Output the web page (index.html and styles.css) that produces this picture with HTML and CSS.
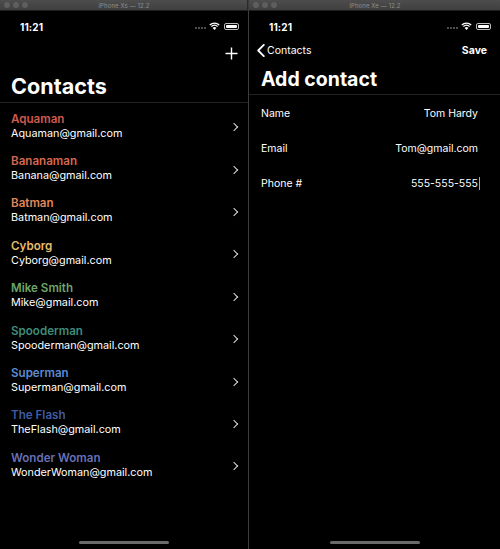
FILE: index.html
```html
<!DOCTYPE html>
<html>
<head>
<meta charset="utf-8">
<link rel="stylesheet" href="styles.css">
</head>
<body>
<div class="desk">
  <section class="win win-left">
    <div class="titlebar">
      <div class="lights"><span></span><span></span><span></span></div>
      <div class="wtitle">iPhone Xs — 12.2</div>
    </div>
    <div class="screen">
      <div class="status">
        <span class="time">11:21</span>
        <span class="sicons">
          <span class="dots"><i></i><i></i><i></i><i></i></span>
          <svg class="wifi" width="11" height="8" viewBox="0 0 11 8"><path d="M5.5 8 L3.6 5.9 A2.8 2.8 0 0 1 7.4 5.9 Z" fill="#fff"/><path d="M2.4 4.6 A4.6 4.6 0 0 1 8.6 4.6" stroke="#fff" stroke-width="1.3" fill="none"/><path d="M0.8 2.9 A6.9 6.9 0 0 1 10.2 2.9" stroke="#fff" stroke-width="1.3" fill="none"/></svg>
          <span class="battery"><b></b></span>
        </span>
      </div>
      <div class="navbar nav-right">
        <svg class="plus" width="13" height="13" viewBox="0 0 13 13"><path d="M6.5 0.5V12.5M0.5 6.5H12.5" stroke="#fff" stroke-width="1.4"/></svg>
      </div>
      <h1 class="large">Contacts</h1>
      <ul class="list">
        <li class="row"><div><div class="nm c1">Aquaman</div><div class="em">Aquaman@gmail.com</div></div><span class="chev"></span></li>
        <li class="row"><div><div class="nm c2">Bananaman</div><div class="em">Banana@gmail.com</div></div><span class="chev"></span></li>
        <li class="row"><div><div class="nm c3">Batman</div><div class="em">Batman@gmail.com</div></div><span class="chev"></span></li>
        <li class="row"><div><div class="nm c4">Cyborg</div><div class="em">Cyborg@gmail.com</div></div><span class="chev"></span></li>
        <li class="row"><div><div class="nm c5">Mike Smith</div><div class="em">Mike@gmail.com</div></div><span class="chev"></span></li>
        <li class="row"><div><div class="nm c6">Spooderman</div><div class="em">Spooderman@gmail.com</div></div><span class="chev"></span></li>
        <li class="row"><div><div class="nm c7">Superman</div><div class="em">Superman@gmail.com</div></div><span class="chev"></span></li>
        <li class="row"><div><div class="nm c8">The Flash</div><div class="em">TheFlash@gmail.com</div></div><span class="chev"></span></li>
        <li class="row"><div><div class="nm c9">Wonder Woman</div><div class="em">WonderWoman@gmail.com</div></div><span class="chev"></span></li>
      </ul>
      <div class="home"><span></span></div>
    </div>
  </section>
  <section class="win win-right">
    <div class="titlebar">
      <div class="lights"><span></span><span></span><span></span></div>
      <div class="wtitle">iPhone Xe — 12.2</div>
    </div>
    <div class="screen">
      <div class="status">
        <span class="time">11:21</span>
        <span class="sicons">
          <span class="dots"><i></i><i></i><i></i><i></i></span>
          <svg class="wifi" width="11" height="8" viewBox="0 0 11 8"><path d="M5.5 8 L3.6 5.9 A2.8 2.8 0 0 1 7.4 5.9 Z" fill="#fff"/><path d="M2.4 4.6 A4.6 4.6 0 0 1 8.6 4.6" stroke="#fff" stroke-width="1.3" fill="none"/><path d="M0.8 2.9 A6.9 6.9 0 0 1 10.2 2.9" stroke="#fff" stroke-width="1.3" fill="none"/></svg>
          <span class="battery"><b></b></span>
        </span>
      </div>
      <div class="navbar nav-split">
        <span class="back"><svg width="8" height="13" viewBox="0 0 8 13"><path d="M6.8 0.8 L1.2 6.5 L6.8 12.2" stroke="#fff" stroke-width="1.8" fill="none" stroke-linecap="round" stroke-linejoin="round"/></svg>Contacts</span>
        <span class="save">Save</span>
      </div>
      <h1 class="large large2">Add contact</h1>
      <div class="form">
        <div class="frow"><span>Name</span><span>Tom Hardy</span></div>
        <div class="frow"><span>Email</span><span>Tom@gmail.com</span></div>
        <div class="frow"><span>Phone #</span><span class="caret">555-555-555</span></div>
      </div>
      <div class="home"><span></span></div>
    </div>
  </section>
</div>
</body>
</html>
```
FILE: styles.css
```css
* { box-sizing: border-box; margin: 0; padding: 0; }
html, body { background: #000; }
body { width: 500px; height: 549px; overflow: hidden; font-family: Inter, "Noto Sans", "Liberation Sans", sans-serif; color: #fff; }
.desk { display: flex; width: 500px; height: 549px; }
.win { display: flex; flex-direction: column; height: 549px; background: #000; }
.win-left { width: 249px; border-right: 1px solid #3c3c3c; }
.win-right { width: 251px; }
.titlebar { height: 11px; background: linear-gradient(#4d4d4d, #3f3f3f); border-bottom: 1px solid #1e1e1e; display: flex; align-items: center; position: relative; }
.win-left .titlebar { border-right: 1px solid #2a2a2a; }
.lights { display: flex; gap: 3px; padding-left: 4px; }
.lights span { width: 6px; height: 6px; border-radius: 50%; background: #5e5e5e; }
.wtitle { flex: 1; text-align: center; font-size: 6px; color: #8e8e8e; margin-right: 27px; letter-spacing: 0.1px; }
.screen { flex: 1; display: flex; flex-direction: column; }
.status { height: 29px; display: flex; align-items: center; justify-content: space-between; padding: 2px 9px 0 20px; }
.time { font-size: 10px; font-weight: 700; letter-spacing: 0.1px; }
.sicons { display: flex; align-items: center; gap: 3px; }
.dots { display: flex; gap: 1px; margin-top: 3px; }
.dots i { width: 2px; height: 2px; border-radius: 50%; background: #666; }
.wifi { margin-top: -1px; }
.battery { width: 15px; height: 7px; border: 1px solid #bbb; border-radius: 2px; padding: 1px; display: flex; margin-left: 1px; }
.battery b { flex: 1; background: #fff; border-radius: 1px; }
.navbar { height: 26px; display: flex; align-items: center; }
.nav-right { justify-content: flex-end; padding-right: 10px; }
.nav-split { justify-content: space-between; padding: 0 13px 6px 8px; font-size: 10.5px; }
.back { display: flex; align-items: center; gap: 2px; }
.save { font-weight: 700; }
.large { font-size: 21.6px; font-weight: 700; padding: 7px 11px 0; height: 37px; border-bottom: 1px solid #222; letter-spacing: 0; }
.large2 { font-size: 19.5px; height: 29px; padding: 0 12px; line-height: 26px; }
.list { list-style: none; padding-top: 2px; }
.row { height: 42.4px; display: flex; align-items: center; justify-content: space-between; padding: 0 10px 0 11px; }
.nm { font-size: 11.6px; font-weight: 600; line-height: 14px; }
.em { font-size: 10.8px; line-height: 15px; }
.chev { width: 6px; height: 6px; border-right: 1.6px solid #ddd; border-top: 1.6px solid #ddd; transform: rotate(45deg); margin-right: 1px; margin-top: 2px; }
.c1 { color: #d05a4e; }
.c2 { color: #d8684e; }
.c3 { color: #e0875a; }
.c4 { color: #e8bd6a; }
.c5 { color: #6ca66a; }
.c6 { color: #3e8c7a; }
.c7 { color: #5b8ad4; }
.c8 { color: #3f5da6; }
.c9 { color: #6870b6; }
.form { padding: 1px 22px 0 12px; }
.frow { height: 35px; display: flex; align-items: center; justify-content: space-between; font-size: 10.5px; }
.caret { border-right: 1px solid #aaa; padding-right: 1px; margin-right: -2px; }
.home { margin-top: auto; height: 8px; display: flex; justify-content: center; }
.home span { width: 90px; height: 3px; border-radius: 2px; background: #6a6a6a; }
```
